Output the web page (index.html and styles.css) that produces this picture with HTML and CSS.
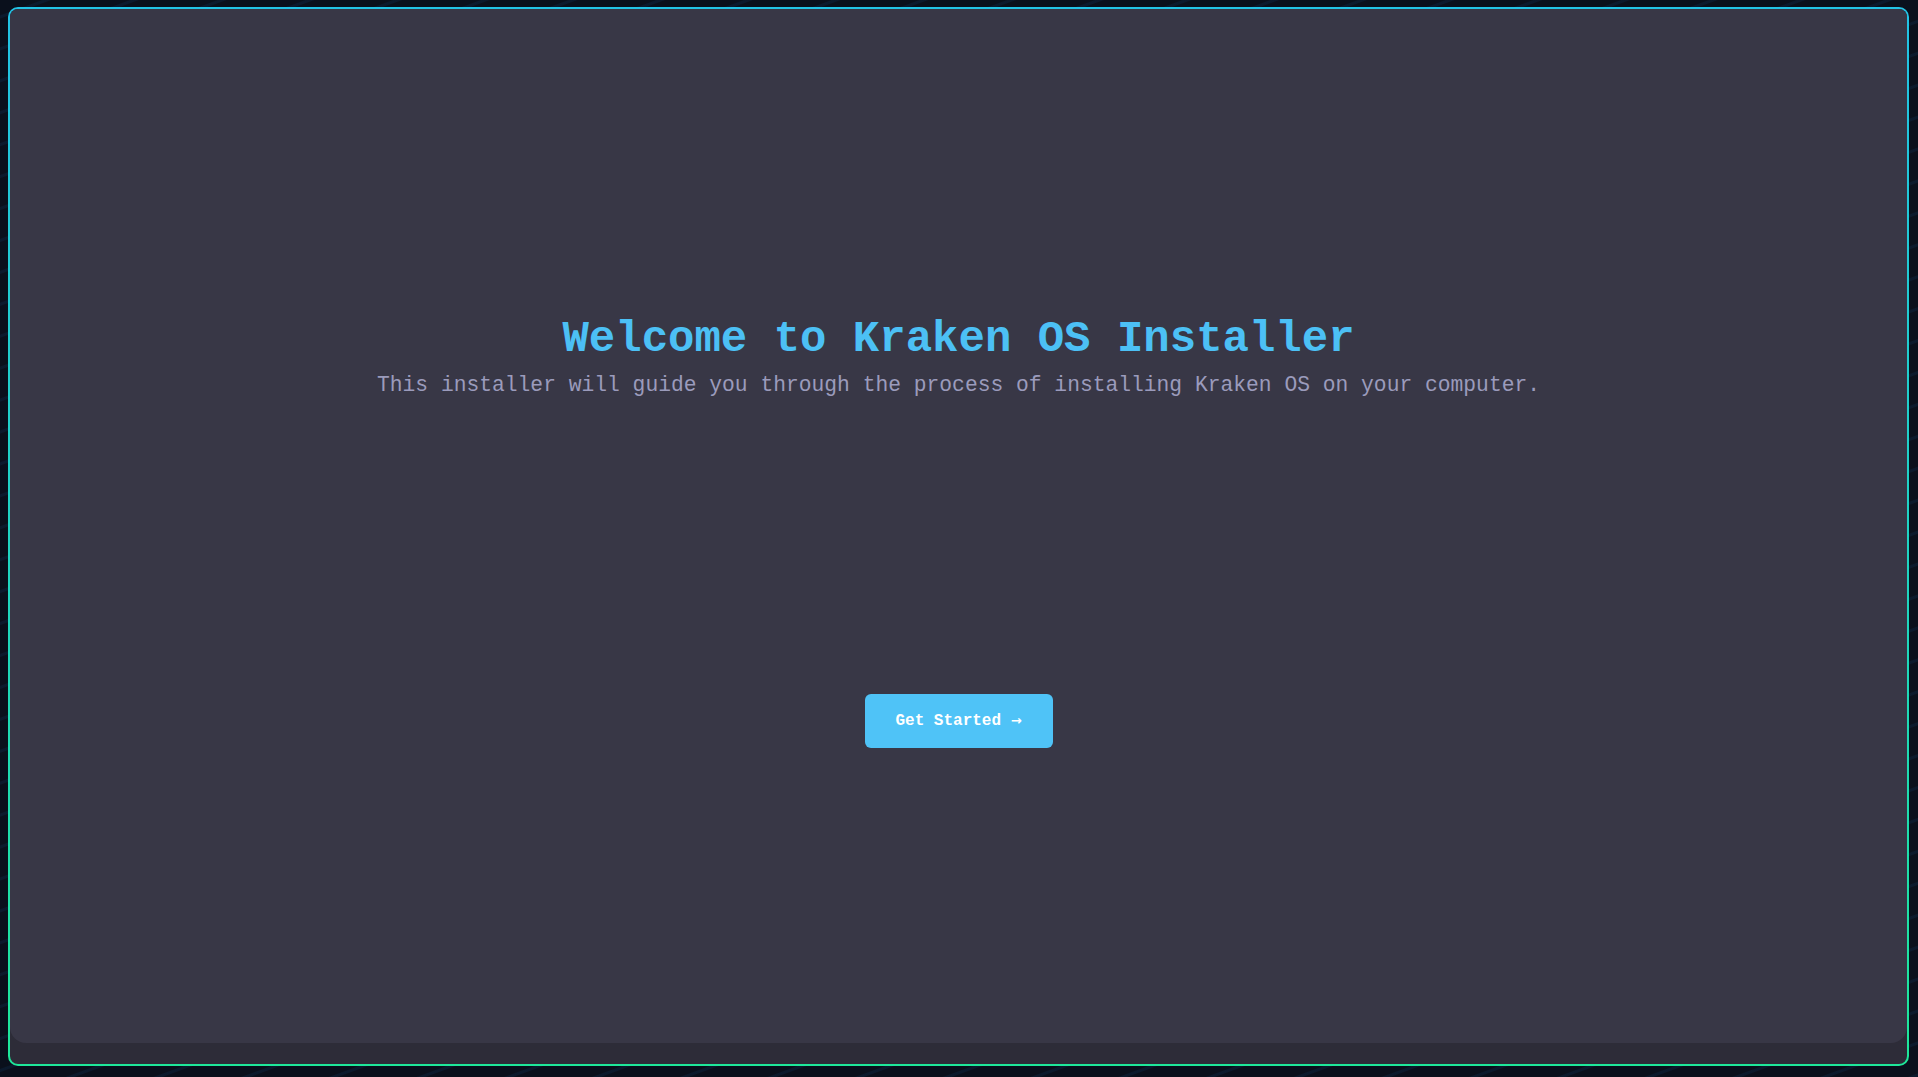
FILE: index.html
```html
<!DOCTYPE html>
<html lang="en">
<head>
<meta charset="utf-8">
<title>Kraken OS Installer</title>
<link rel="stylesheet" href="styles.css">
</head>
<body>
<div class="frame">
  <div class="frame-inner">
    <main class="panel">
      <h1 class="title">Welcome to Kraken OS Installer</h1>
      <p class="subtitle">This installer will guide you through the process of installing Kraken OS on your computer.</p>
      <button class="start-btn" type="button">Get Started <span class="arrow">&rarr;</span></button>
    </main>
  </div>
</div>
</body>
</html>
```

FILE: styles.css
```css
html, body {
  margin: 0;
  padding: 0;
  height: 100%;
}

body {
  background-color: #0a101c;
  background-image: repeating-linear-gradient(160deg, rgba(20, 60, 100, 0) 0px, rgba(20, 60, 100, 0) 14px, rgba(20, 70, 120, 0.18) 15px, rgba(20, 70, 120, 0.18) 17px, rgba(20, 60, 100, 0) 18px, rgba(20, 60, 100, 0) 30px);
  font-family: "Liberation Mono", "DejaVu Sans Mono", monospace;
  overflow: hidden;
}

.frame {
  box-sizing: border-box;
  margin: 7px 9px 0 8px;
  height: 1059px;
  padding: 2px;
  border-radius: 10px;
  background: linear-gradient(180deg, #22c3e6 0%, #1fd6c0 55%, #1ee89a 100%);
}

.frame-inner {
  height: 100%;
  border-radius: 8px;
  background: #2d2c38;
}

.panel {
  box-sizing: border-box;
  height: 1034px;
  border-radius: 8px 8px 16px 16px;
  background: #383746;
  padding-top: 304px;
  display: flex;
  flex-direction: column;
  align-items: center;
}

.title {
  margin: 0;
  font-size: 44px;
  line-height: 53px;
  font-weight: 700;
  color: #4cc0f5;
  letter-spacing: 0;
}

.subtitle {
  margin: 5px 0 0;
  font-size: 21.3px;
  line-height: 28px;
  color: #9b9bbc;
}

.start-btn {
  margin-top: 295px;
  width: 188px;
  height: 54px;
  border: none;
  border-radius: 6px;
  background: #4fc3f7;
  color: #ffffff;
  font-family: "Liberation Mono", "DejaVu Sans Mono", monospace;
  font-size: 16px;
  font-weight: 700;
  cursor: pointer;
}

.arrow {
  font-family: "DejaVu Sans", sans-serif;
  font-size: 13px;
}
```
